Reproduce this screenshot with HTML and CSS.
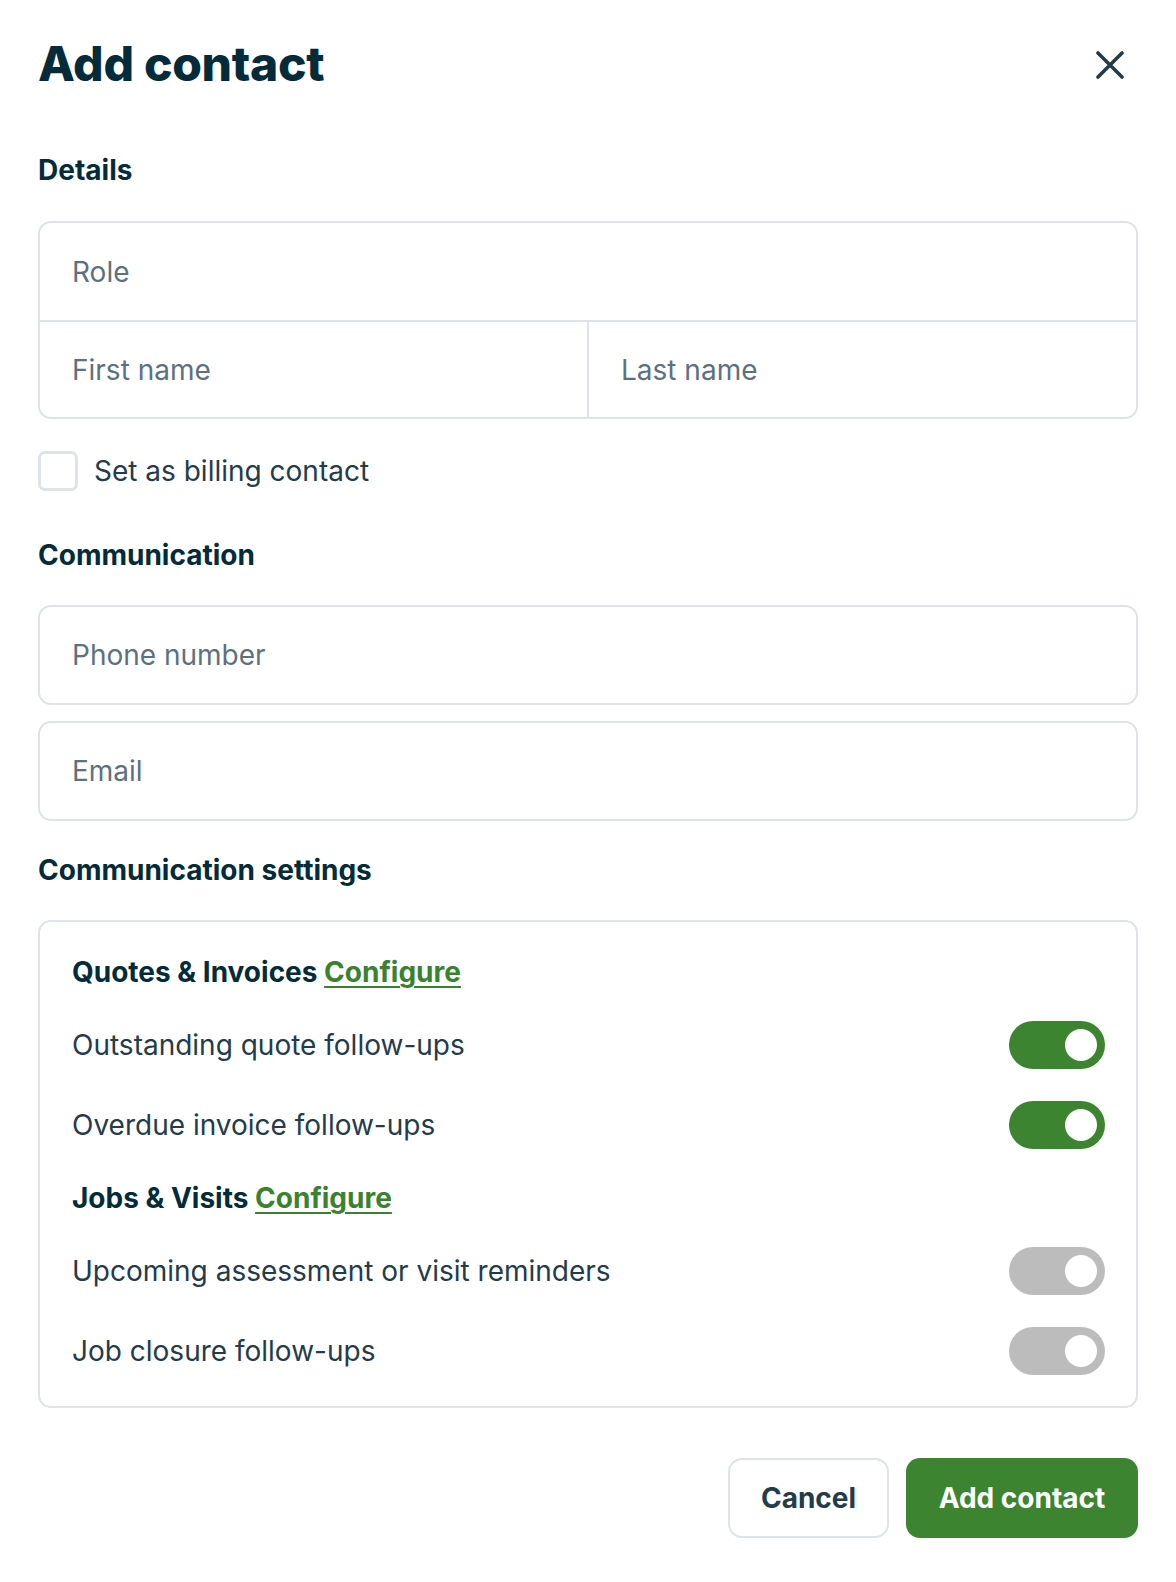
FILE: index.html
```html
<!DOCTYPE html>
<html lang="en">
<head>
<meta charset="utf-8">
<title>Add contact</title>
<link rel="stylesheet" href="styles.css">
</head>
<body>
<div class="modal">
  <header class="modal-header">
    <h1 class="title">Add contact</h1>
    <button class="close" aria-label="Close">
      <svg width="28" height="28" viewBox="0 0 28 28" fill="none" stroke="#243b4a" stroke-width="3.6" stroke-linecap="round"><path d="M2 2L26 26M26 2L2 26"/></svg>
    </button>
  </header>

  <section class="section details">
    <h2 class="heading">Details</h2>
    <div class="field-group">
      <div class="field-row"><div class="field">Role</div></div>
      <div class="field-row split">
        <div class="field">First name</div>
        <div class="field">Last name</div>
      </div>
    </div>
  </section>

  <label class="check-row">
    <span class="checkbox"></span>
    <span class="check-label">Set as billing contact</span>
  </label>

  <section class="section comm">
    <h2 class="heading">Communication</h2>
    <div class="stack">
      <div class="input">Phone number</div>
      <div class="input">Email</div>
    </div>
  </section>

  <section class="section settings-section">
    <h2 class="heading">Communication settings</h2>
    <div class="settings">
      <div class="group-title">Quotes &amp; Invoices <a class="link">Configure</a></div>
      <div class="setting"><span>Outstanding quote follow-ups</span><span class="toggle on"><span class="knob"></span></span></div>
      <div class="setting"><span>Overdue invoice follow-ups</span><span class="toggle on"><span class="knob"></span></span></div>
      <div class="group-title">Jobs &amp; Visits <a class="link">Configure</a></div>
      <div class="setting"><span>Upcoming assessment or visit reminders</span><span class="toggle off"><span class="knob"></span></span></div>
      <div class="setting"><span>Job closure follow-ups</span><span class="toggle off"><span class="knob"></span></span></div>
    </div>
  </section>

  <footer class="actions">
    <button class="btn secondary">Cancel</button>
    <button class="btn primary">Add contact</button>
  </footer>
</div>
</body>
</html>
```

FILE: styles.css
```css
* { box-sizing: border-box; }
html, body { margin: 0; padding: 0; background: #ffffff; }
body {
  font-family: Inter, "Noto Sans", "Liberation Sans", sans-serif;
  color: #032b3a;
}
.modal {
  width: 1176px;
  padding: 35px 38px 0 38px;
  display: flex;
  flex-direction: column;
}
.modal-header {
  display: flex;
  align-items: center;
  justify-content: space-between;
}
.title {
  margin: 0;
  font-size: 48px;
  line-height: 58px;
  font-weight: 800;
  color: #032b3a;
  letter-spacing: -0.3px;
}
.close {
  width: 56px;
  height: 56px;
  border: 0;
  background: none;
  padding: 0;
  display: flex;
  align-items: center;
  justify-content: center;
  margin-top: 2px;
}
.section { display: flex; flex-direction: column; gap: 34px; }
.details { margin-top: 60px; }
.heading {
  margin: 0;
  font-size: 28px;
  line-height: 34px;
  font-weight: 700;
  color: #032b3a;
}
.field-group {
  border: 2px solid #dde3e6;
  border-radius: 13px;
  display: flex;
  flex-direction: column;
}
.field-row { display: flex; height: 97px; }
.field-row + .field-row { border-top: 2px solid #dde3e6; }
.field-row.split .field + .field { border-left: 2px solid #dde3e6; }
.field {
  flex: 1;
  display: flex;
  align-items: center;
  padding-left: 32px;
  font-size: 28px;
  color: #5d717d;
}
.check-row {
  margin-top: 32px;
  display: flex;
  align-items: center;
  gap: 16px;
}
.checkbox {
  width: 40px;
  height: 40px;
  border: 3px solid #dde3e6;
  border-radius: 7px;
}
.check-label { font-size: 28px; color: #243b4a; }
.comm { margin-top: 47px; gap: 33px; }
.stack { display: flex; flex-direction: column; gap: 16px; }
.input {
  height: 100px;
  border: 2px solid #dde3e6;
  border-radius: 13px;
  display: flex;
  align-items: center;
  padding-left: 32px;
  font-size: 28px;
  color: #5d717d;
}
.settings-section { margin-top: 32px; gap: 33px; }
.settings {
  border: 2px solid #dde3e6;
  border-radius: 13px;
  padding: 33px 31px 31px 32px;
  display: flex;
  flex-direction: column;
  gap: 32px;
}
.group-title {
  font-size: 28px;
  line-height: 34px;
  font-weight: 700;
  color: #032b3a;
}
.link {
  color: #3b8230;
  text-decoration: underline;
  text-decoration-thickness: 2px;
  text-underline-offset: 4px;
}
.setting {
  display: flex;
  align-items: center;
  justify-content: space-between;
  height: 48px;
  font-size: 28px;
  color: #243b4a;
}
.toggle {
  width: 96px;
  height: 48px;
  border-radius: 24px;
  display: flex;
  align-items: center;
  justify-content: flex-end;
  padding-right: 8px;
}
.toggle.on { background: #3d8431; }
.toggle.off { background: #bcbcbc; }
.knob {
  width: 32px;
  height: 32px;
  border-radius: 50%;
  background: #ffffff;
}
.actions {
  margin-top: 50px;
  display: flex;
  justify-content: flex-end;
  gap: 17px;
}
.btn {
  height: 80px;
  border-radius: 14px;
  font-family: Inter, "Noto Sans", "Liberation Sans", sans-serif;
  font-size: 28px;
  font-weight: 700;
  padding: 0;
  white-space: nowrap;
}
.btn.secondary {
  width: 161px;
  background: #ffffff;
  border: 2px solid #dde3e6;
  color: #243b4a;
}
.btn.primary {
  width: 232px;
  background: #3d8431;
  border: 0;
  color: #ffffff;
}
```
